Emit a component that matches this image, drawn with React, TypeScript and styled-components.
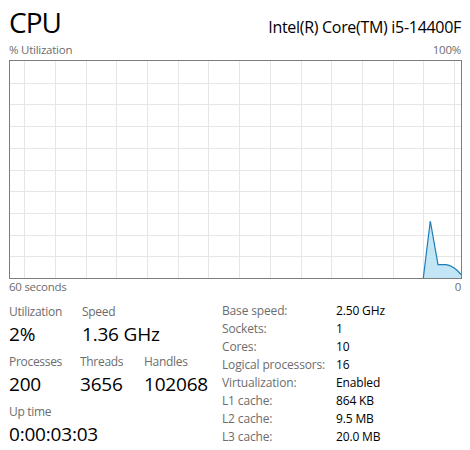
import React from "react";
import styled, { createGlobalStyle } from "styled-components";

const Global = createGlobalStyle`
  html, body { margin: 0; padding: 0; background: #ffffff; }
  body { font-family: "Open Sans", "Noto Sans", sans-serif; color: #000; }
`;

const Page = styled.div`
  width: 470px;
  height: 450px;
  padding: 0 9px;
  box-sizing: border-box;
  overflow: hidden;
`;

const Header = styled.div`
  display: flex;
  justify-content: space-between;
  align-items: baseline;
  padding-top: 2px;
  height: 40px;
`;

const Title = styled.div`
  font-size: 28px;
  line-height: 40px;
  letter-spacing: -1px;
`;

const Model = styled.div`
  font-size: 16px;
  line-height: 40px;
  letter-spacing: -0.3px;
`;

const AxisRow = styled.div`
  display: flex;
  justify-content: space-between;
  font-size: 11.5px;
  line-height: 16px;
  letter-spacing: -0.25px;
  color: #6d6d6d;
`;

const GraphBox = styled.div`
  border: 1px solid #7d7d7d;
  height: 217px;
  width: 451px;
  margin-top: 2px;
`;

const Stats = styled.div`
  display: grid;
  grid-template-columns: 213px 1fr;
  margin-top: 6px;
`;

const LeftCol = styled.div`
  display: flex;
  flex-direction: column;
  padding-top: 2px;
`;

const StatRow = styled.div`
  display: flex;
  height: 50px;
`;

const Stat = styled.div<{ $w?: number }>`
  display: flex;
  flex-direction: column;
  width: ${(p) => (p.$w ? `${p.$w}px` : "auto")};
`;

const Label = styled.div`
  font-size: 12px;
  line-height: 18px;
  letter-spacing: -0.3px;
  color: #6d6d6d;
  white-space: nowrap;
`;

const Value = styled.div`
  font-size: 19px;
  line-height: 27px;
  color: #000;
  white-space: nowrap;
  letter-spacing: -0.2px;
`;

const InfoTable = styled.div`
  display: grid;
  grid-template-columns: 114px auto;
  grid-auto-rows: 18px;
  padding-top: 1px;
  font-size: 12px;
  line-height: 18px;
  letter-spacing: -0.15px;
  white-space: nowrap;
`;

const InfoKey = styled.div`
  color: #6d6d6d;
`;

const InfoVal = styled.div`
  color: #000;
`;

const W = 451;
const H = 217;

function Chart() {
  const vlines: number[] = [];
  for (let x = 14.3; x < W; x += 30.69) vlines.push(x);
  const hlines: number[] = [];
  for (let i = 1; i < 10; i++) hlines.push((H / 10) * i);
  const area =
    "M413.3,217 L420.3,160 L428,203.7 L436,203.7 Q444,205 451,213.5 L451,217 Z";
  const line =
    "M413.3,217 L420.3,160 L428,203.7 L436,203.7 Q444,205 451,213.5";
  return (
    <svg width={W} height={H} viewBox={`0 0 ${W} ${H}`} style={{ display: "block" }}>
      {vlines.map((x) => (
        <line key={"v" + x} x1={Math.round(x) + 0.5} x2={Math.round(x) + 0.5} y1={0} y2={H} stroke="#e6e6e6" strokeWidth={1} />
      ))}
      {hlines.map((y) => (
        <line key={"h" + y} x1={0} x2={W} y1={Math.round(y) + 0.5} y2={Math.round(y) + 0.5} stroke="#e6e6e6" strokeWidth={1} />
      ))}
      <path d={area} fill="#c3e6f6" />
      <path d={line} fill="none" stroke="#1c7db6" strokeWidth={1.2} strokeLinejoin="miter" />
    </svg>
  );
}

const info: [string, string][] = [
  ["Base speed:", "2.50 GHz"],
  ["Sockets:", "1"],
  ["Cores:", "10"],
  ["Logical processors:", "16"],
  ["Virtualization:", "Enabled"],
  ["L1 cache:", "864 KB"],
  ["L2 cache:", "9.5 MB"],
  ["L3 cache:", "20.0 MB"],
];

export default function App() {
  return (
    <>
      <Global />
      <Page>
        <Header>
          <Title>CPU</Title>
          <Model>Intel(R) Core(TM) i5-14400F</Model>
        </Header>
        <AxisRow>
          <span>% Utilization</span>
          <span>100%</span>
        </AxisRow>
        <GraphBox>
          <Chart />
        </GraphBox>
        <AxisRow>
          <span>60 seconds</span>
          <span>0</span>
        </AxisRow>
        <Stats>
          <LeftCol>
            <StatRow>
              <Stat $w={73}>
                <Label>Utilization</Label>
                <Value>2%</Value>
              </Stat>
              <Stat>
                <Label>Speed</Label>
                <Value>1.36 GHz</Value>
              </Stat>
            </StatRow>
            <StatRow>
              <Stat $w={71}>
                <Label>Processes</Label>
                <Value>200</Value>
              </Stat>
              <Stat $w={64}>
                <Label>Threads</Label>
                <Value>3656</Value>
              </Stat>
              <Stat>
                <Label>Handles</Label>
                <Value>102068</Value>
              </Stat>
            </StatRow>
            <StatRow>
              <Stat>
                <Label>Up time</Label>
                <Value>0:00:03:03</Value>
              </Stat>
            </StatRow>
          </LeftCol>
          <InfoTable>
            {info.map(([k, v]) => (
              <React.Fragment key={k}>
                <InfoKey>{k}</InfoKey>
                <InfoVal>{v}</InfoVal>
              </React.Fragment>
            ))}
          </InfoTable>
        </Stats>
      </Page>
    </>
  );
}
